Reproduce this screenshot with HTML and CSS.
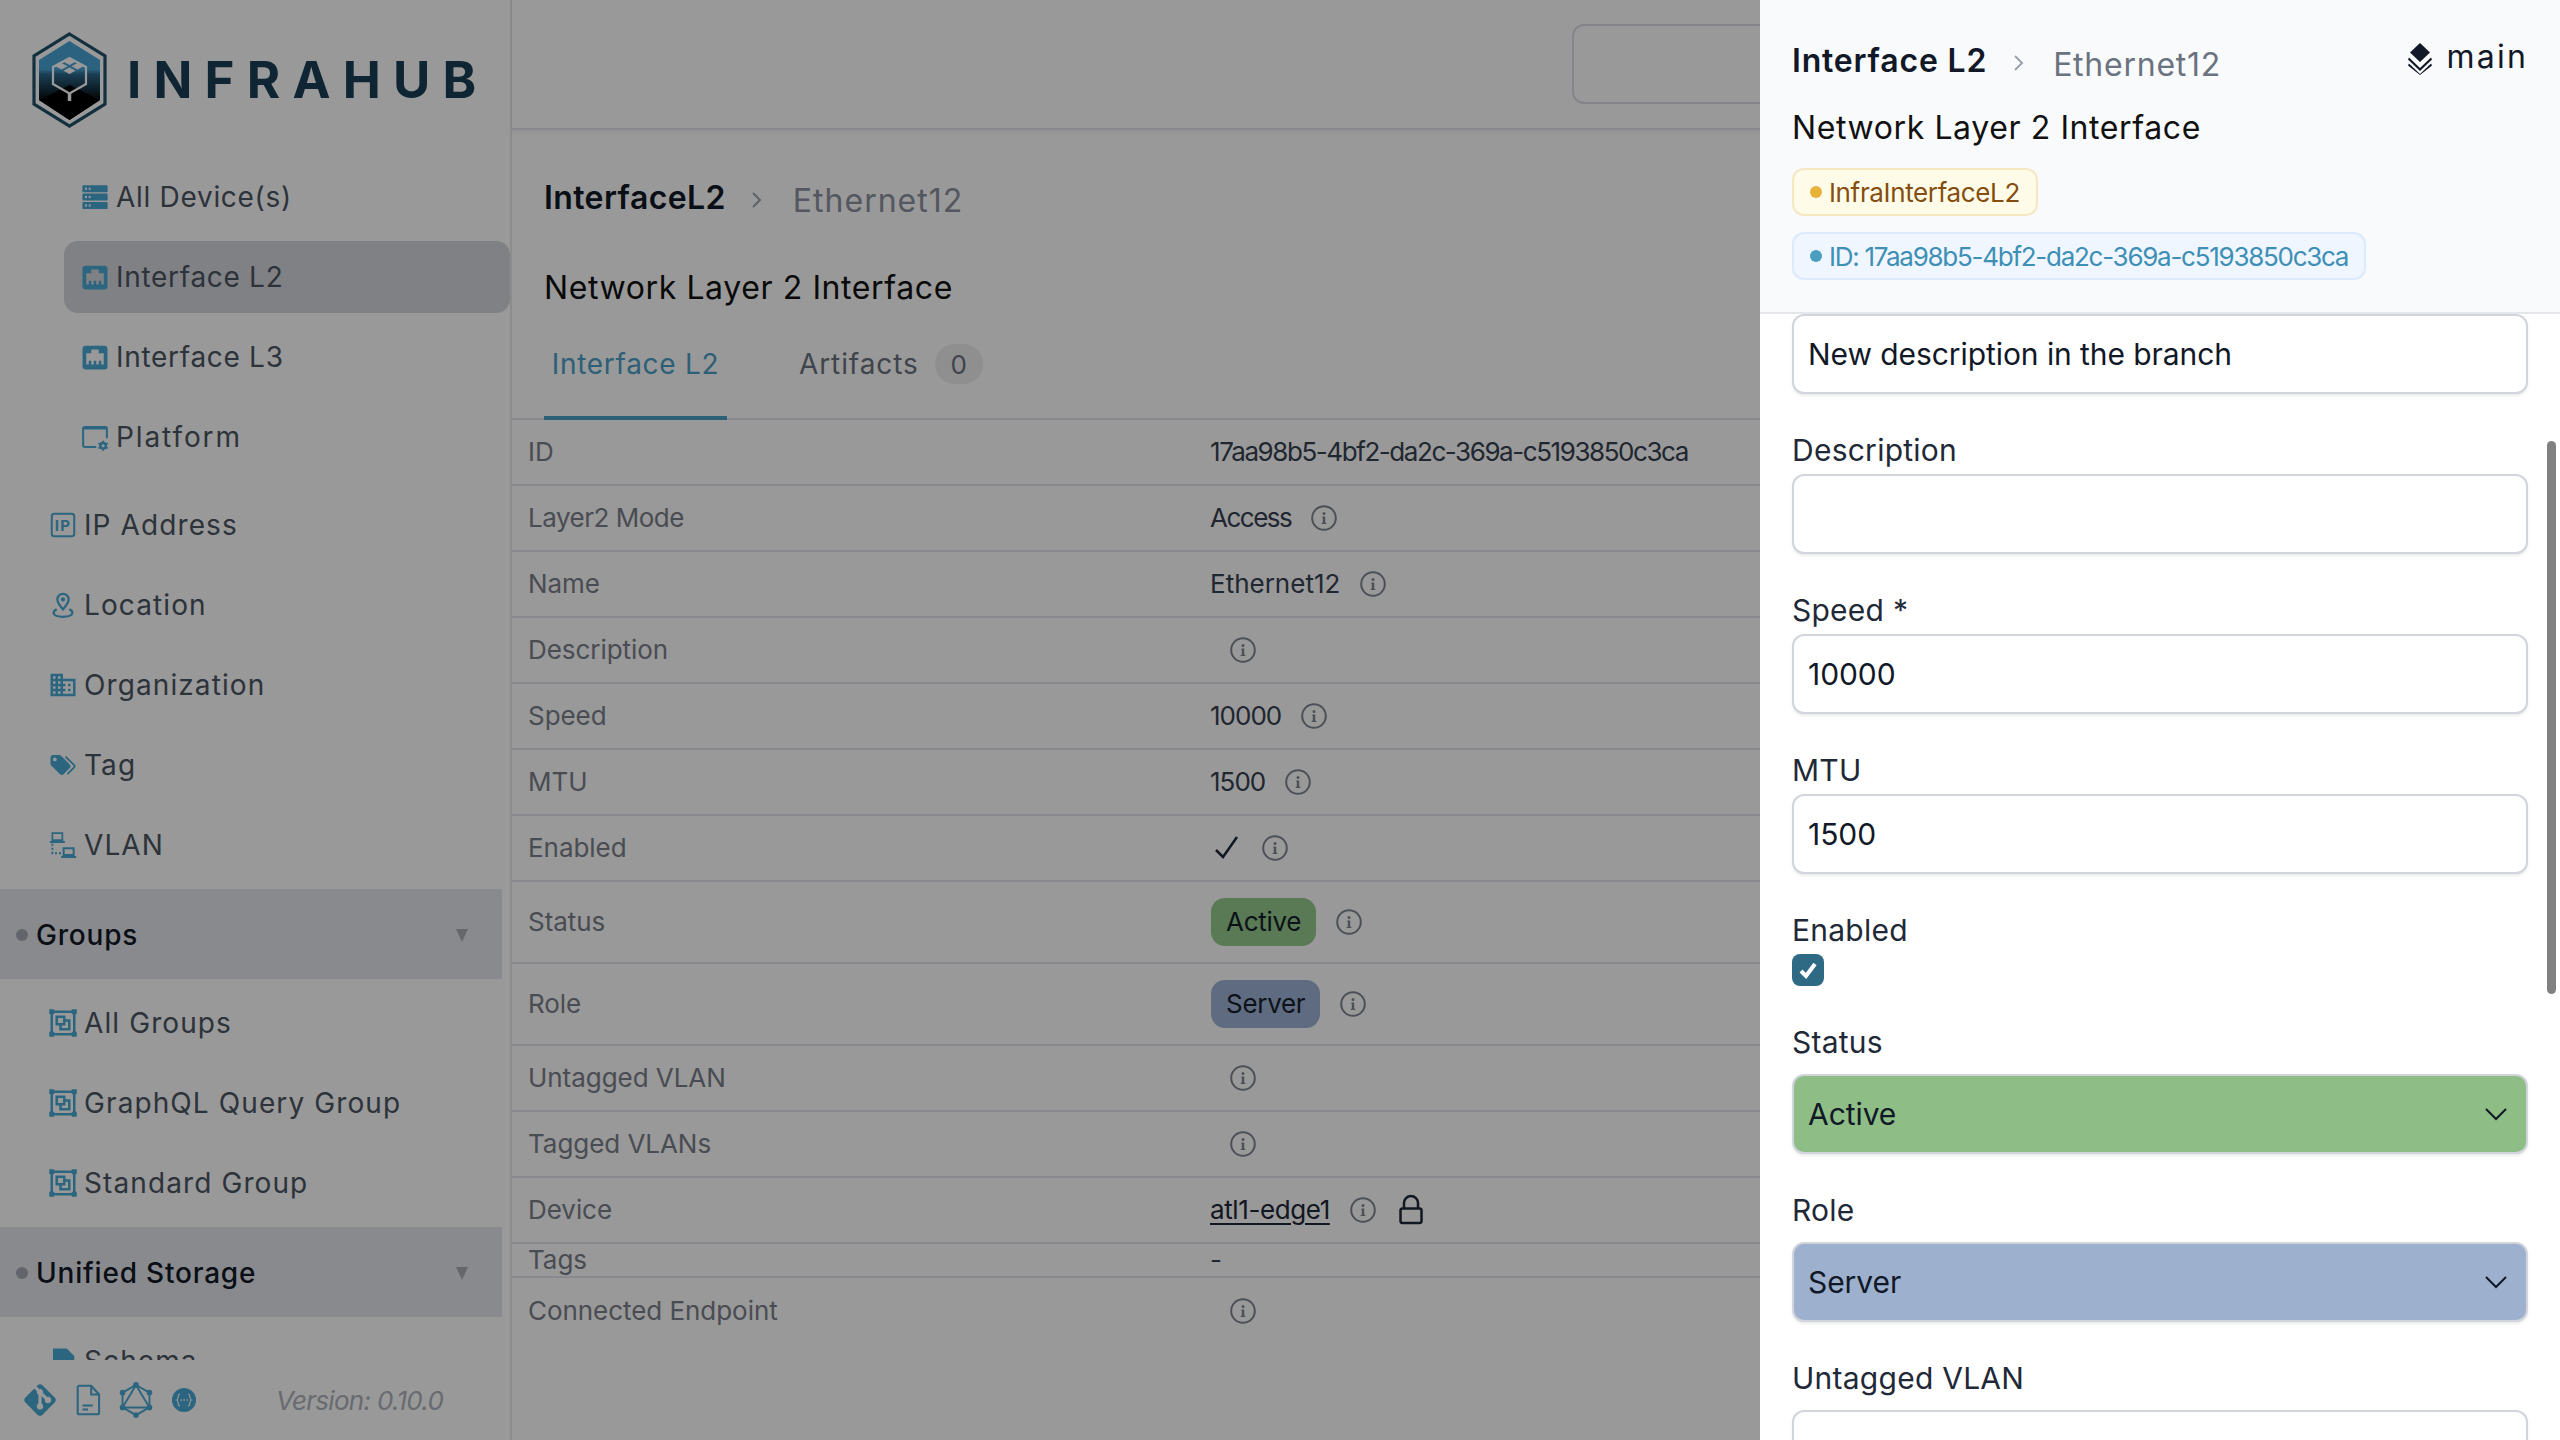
FILE: index.html
```html
<!DOCTYPE html>
<html lang="en">
<head>
    <meta charset="UTF-8">
    <title>Interface L2 - Infrahub</title>
    <link rel="stylesheet" href="styles.css">
</head>
<body>
    <svg class="sprite" xmlns="http://www.w3.org/2000/svg">
        <symbol id="i-server" viewBox="0 0 24 24">
            <path fill="currentColor" fill-rule="evenodd" d="M2.500 2.500h19a.6.6 0 0 1 .6.6v4.400a.6.6 0 0 1-.6.6h-19a.6.6 0 0 1-.6-.6V3.100a.6.6 0 0 1 .6-.6zM4 4.500v1.600h1.600V4.500zM7 4.500v1.600h1.600V4.500zM2.500 9.200h19a.6.6 0 0 1 .6.6v4.400a.6.6 0 0 1-.6.6h-19a.6.6 0 0 1-.6-.6V9.800a.6.6 0 0 1 .6-.6zM4 11.200v1.600h1.600v-1.600zM7 11.200v1.600h1.600v-1.600zM2.500 15.900h19a.6.6 0 0 1 .6.6v4.400a.6.6 0 0 1-.6.6h-19a.6.6 0 0 1-.6-.6v-4.400a.6.6 0 0 1 .6-.6zM4 17.900v1.600h1.600v-1.600zM7 17.900v1.600h1.600v-1.600z"/>
        </symbol>
        <symbol id="i-ethernet" viewBox="0 0 24 24">
            <path fill="currentColor" d="M7,15H9V18H11V15H13V18H15V15H17V18H19V9H15V6H9V9H5V18H7V15M4.38,3H19.63C20.94,3 22,4.06 22,5.38V19.63A2.37,2.37 0 0,1 19.63,22H4.38C3.06,22 2,20.94 2,19.63V5.38C2,4.06 3.06,3 4.38,3Z"/>
        </symbol>
        <symbol id="i-platform" viewBox="0 0 24 24">
            <path fill="none" stroke="currentColor" stroke-width="1.600" d="M13 20H3.800A1.300 1.300 0 0 1 2.500 18.700V5.300A1.300 1.300 0 0 1 3.800 4H20.200A1.300 1.300 0 0 1 21.500 5.300V13"/>
            <path fill="none" stroke="currentColor" stroke-width="2" d="M2.500 5h19"/>
            <circle cx="18.500" cy="19" r="2.200" fill="none" stroke="currentColor" stroke-width="2"/>
            <path fill="none" stroke="currentColor" stroke-width="1.400" d="M18.500 15v1.200M18.500 21.800V23M14.700 17l1.200.6M21.100 20.400l1.200.6M14.700 21l1.200-.6M21.100 17.600l1.200-.6"/>
        </symbol>
        <symbol id="i-ip" viewBox="0 0 24 24">
            <rect x="3" y="3" width="18" height="18" rx="2" fill="none" stroke="currentColor" stroke-width="1.600"/>
            <text class="ip-mark" x="12" y="16.500" text-anchor="middle" fill="currentColor">IP</text>
        </symbol>
        <symbol id="i-pin" viewBox="0 0 24 24">
            <path fill="none" stroke="currentColor" stroke-width="1.800" d="M12 15.500C9.500 12.500 7.500 10 7.500 7.500a4.500 4.500 0 0 1 9 0C16.500 10 14.500 12.500 12 15.500Z"/>
            <circle cx="12" cy="7.500" r="1.700" fill="currentColor"/>
            <path fill="none" stroke="currentColor" stroke-width="1.800" d="M7 15.500c-1.500.6-2.500 1.500-2.500 2.700C4.500 20.300 8 21.500 12 21.500s7.500-1.200 7.500-3.300c0-1.200-1-2.100-2.500-2.700"/>
        </symbol>
        <symbol id="i-domain" viewBox="0 0 24 24">
            <path fill="currentColor" d="M18,15H16V17H18M18,11H16V13H18M20,19H12V17H14V15H12V13H14V11H12V9H20M10,7H8V5H10M10,11H8V9H10M10,15H8V13H10M10,19H8V17H10M6,7H4V5H6M6,11H4V9H6M6,15H4V13H6M6,19H4V17H6M12,7V3H2V21H22V7H12Z"/>
        </symbol>
        <symbol id="i-tag" viewBox="0 0 24 24">
            <path fill="currentColor" d="M5.5,9A1.5,1.5 0 0,0 7,7.5A1.5,1.5 0 0,0 5.5,6A1.5,1.5 0 0,0 4,7.5A1.5,1.5 0 0,0 5.5,9M17.41,11.58C17.77,11.94 18,12.44 18,13C18,13.55 17.78,14.05 17.41,14.41L12.41,19.41C12.05,19.77 11.55,20 11,20C10.45,20 9.95,19.78 9.58,19.41L2.59,12.42C2.22,12.05 2,11.55 2,11V6C2,4.89 2.89,4 4,4H9C9.55,4 10.05,4.22 10.41,4.58L17.41,11.58M13.54,5.71L14.54,4.71L21.41,11.58C21.78,11.94 22,12.45 22,13C22,13.55 21.78,14.05 21.42,14.41L16.04,19.79L15.04,18.79L20.75,13L13.54,5.71Z"/>
        </symbol>
        <symbol id="i-lan" viewBox="0 0 24 24">
            <path fill="none" stroke="currentColor" stroke-width="1.400" d="M3.500 2.500h8v5.500h-8z"/>
            <path fill="none" stroke="currentColor" stroke-width="1.600" d="M1.500 9.500h12M12.500 14.500h8v5.500h-8zM10.500 21.500h12"/>
            <path fill="none" stroke="currentColor" stroke-width="1.600" stroke-dasharray="1.600 1.600" d="M3.500 11v7.500h7"/>
        </symbol>
        <symbol id="i-group" viewBox="0 0 24 24">
            <path fill="currentColor" d="M1,1V5H2V19H1V23H5V22H19V23H23V19H22V5H23V1H19V2H5V1M5,4H19V5H20V19H19V20H5V19H4V5H5M6,6V14H9V18H18V9H14V6M8,8H12V12H8M14,11H16V16H11V14H14"/>
        </symbol>
        <symbol id="i-schema" viewBox="0 0 24 24">
            <path fill="currentColor" d="M4 2h11l6 6v14H4z"/>
        </symbol>
        <symbol id="i-git" viewBox="0 0 24 24">
            <path fill="currentColor" d="M2.6,10.59L8.38,4.8L10.07,6.5C9.83,7.35 10.22,8.28 11,8.73V14.27C10.4,14.61 10,15.26 10,16A2,2 0 0,0 12,18A2,2 0 0,0 14,16C14,15.26 13.6,14.61 13,14.27V9.41L15.07,11.5C15,11.65 15,11.82 15,12A2,2 0 0,0 17,14A2,2 0 0,0 19,12A2,2 0 0,0 17,10C16.82,10 16.65,10 16.5,10.07L13.93,7.5C14.19,6.57 13.71,5.55 12.78,5.16C12.35,5 11.9,4.96 11.5,5.07L9.8,3.38L10.59,2.6C11.37,1.81 12.63,1.81 13.41,2.6L21.4,10.59C22.19,11.37 22.19,12.63 21.4,13.41L13.41,21.4C12.63,22.19 11.37,22.19 10.59,21.4L2.6,13.41C1.81,12.63 1.81,11.37 2.6,10.59Z"/>
        </symbol>
        <symbol id="i-doc" viewBox="0 0 24 24">
            <path fill="none" stroke="currentColor" stroke-width="1.300" stroke-linejoin="round" d="M6.500 3H14L19 8.500V20a1 1 0 0 1-1 1H6.500a1 1 0 0 1-1-1V4a1 1 0 0 1 1-1Z"/>
            <path fill="none" stroke="currentColor" stroke-width="1.300" d="M14 3v5.500h5M8.500 15.500h6.500M8.500 18h3.500"/>
        </symbol>
        <symbol id="i-graphql" viewBox="0 0 24 24">
            <path fill="none" stroke="currentColor" stroke-width="1.200" d="M12 2.500 20.500 7.300V16.700L12 21.500 3.500 16.700V7.300ZM12 2.500 20.500 16.700H3.500Z"/>
            <g fill="currentColor">
                <circle cx="12" cy="2.500" r="1.800"/>
                <circle cx="20.500" cy="7.300" r="1.800"/>
                <circle cx="20.500" cy="16.700" r="1.800"/>
                <circle cx="12" cy="21.500" r="1.800"/>
                <circle cx="3.500" cy="16.700" r="1.800"/>
                <circle cx="3.500" cy="7.300" r="1.800"/>
            </g>
        </symbol>
        <symbol id="i-swagger" viewBox="0 0 24 24">
            <circle cx="12" cy="12" r="7.600" fill="currentColor"/>
            <path fill="none" stroke="#fff" stroke-width=".7" d="M9.400 8.200c-1.600 0-.6 3.200-2 3.800 1.400.6.400 3.800 2 3.800M14.600 8.200c1.600 0 .6 3.200 2 3.800-1.400.6-.4 3.800-2 3.800"/>
            <path fill="none" stroke="#fff" stroke-width=".9" stroke-dasharray=".9 1" d="M9.700 12h5"/>
        </symbol>
        <symbol id="i-info" viewBox="0 0 26 26">
            <circle cx="13" cy="13" r="11.800" fill="none" stroke="currentColor" stroke-width="2"/>
            <path fill="currentColor" d="M11.400 11.600h2.800v6.200h1.100v1.300h-4.600v-1.300h1.100v-4.900h-.4zM13 7a1.500 1.500 0 1 1 0 3 1.500 1.500 0 0 1 0-3Z"/>
        </symbol>
        <symbol id="i-chevron" viewBox="0 0 14 20">
            <path fill="none" stroke="currentColor" stroke-width="2" d="M3 3l7 7-7 7"/>
        </symbol>
        <symbol id="i-down" viewBox="0 0 22 14">
            <path fill="none" stroke="currentColor" stroke-width="2" d="M1 2l10 10L21 2"/>
        </symbol>
    </svg>

    <div class="app">
        <aside class="sidebar">
            <div class="logo">
                <svg class="logo-mark" viewBox="0 0 75 96" xmlns="http://www.w3.org/2000/svg">
                    <defs>
                        <linearGradient id="logo-fill" x1="0" y1="0" x2="0" y2="1">
                            <stop offset="0" stop-color="#46a3d5"/>
                            <stop offset=".36" stop-color="#46a3d5"/>
                            <stop offset=".42" stop-color="#2c6a8c"/>
                            <stop offset=".7" stop-color="#0a1820"/>
                            <stop offset="1" stop-color="#000"/>
                        </linearGradient>
                    </defs>
                    <polygon points="37.5,2 73,24 73,72 37.5,94 2,72 2,24" fill="#fff" stroke="#21506a" stroke-width="3.200"/>
                    <polygon points="37.500,9 68,28 68,68 37.500,88 7,68 7,28" fill="url(#logo-fill)"/>
                    <polygon points="37.500,53 68,68 37.500,88 7,68" fill="#000"/>
                    <polygon points="37.500,26 54,35 54,52 37.500,61.500 21,52 21,35" fill="none" stroke="#fff" stroke-width="2.200"/>
                    <path fill="#fff" d="M37.500 26.500l6 3.200-6 3.200-6-3.200zM29.500 31l6 3.200-6 3.200-6-3.200zM45.500 31l6 3.200-6 3.200-6-3.200zM37.500 35.500l6 3.200-6 3.200-6-3.200z"/>
                    <path fill="none" stroke="#fff" stroke-width="3.500" d="M37.500 61v8"/>
                </svg>
                <span class="logo-text">INFRAHUB</span>
            </div>

            <nav class="nav">
                <div class="nav-sub">
                    <a class="nav-item tight"><svg class="nav-icon"><use href="#i-server"/></svg>All Device(s)</a>
                    <a class="nav-item tight active"><svg class="nav-icon"><use href="#i-ethernet"/></svg>Interface L2</a>
                    <a class="nav-item tight"><svg class="nav-icon"><use href="#i-ethernet"/></svg>Interface L3</a>
                    <a class="nav-item wide"><svg class="nav-icon"><use href="#i-platform"/></svg>Platform</a>
                </div>
                <div class="nav-list">
                    <a class="nav-item"><svg class="nav-icon"><use href="#i-ip"/></svg>IP Address</a>
                    <a class="nav-item"><svg class="nav-icon"><use href="#i-pin"/></svg>Location</a>
                    <a class="nav-item"><svg class="nav-icon"><use href="#i-domain"/></svg>Organization</a>
                    <a class="nav-item"><svg class="nav-icon"><use href="#i-tag"/></svg>Tag</a>
                    <a class="nav-item"><svg class="nav-icon"><use href="#i-lan"/></svg>VLAN</a>
                </div>
                <div class="nav-head"><span class="nav-dot"></span>Groups<span class="nav-caret"></span></div>
                <div class="nav-list">
                    <a class="nav-item"><svg class="nav-icon"><use href="#i-group"/></svg>All Groups</a>
                    <a class="nav-item"><svg class="nav-icon"><use href="#i-group"/></svg>GraphQL Query Group</a>
                    <a class="nav-item"><svg class="nav-icon"><use href="#i-group"/></svg>Standard Group</a>
                </div>
                <div class="nav-head"><span class="nav-dot"></span>Unified Storage<span class="nav-caret"></span></div>
                <div class="nav-list">
                    <a class="nav-item"><svg class="nav-icon"><use href="#i-schema"/></svg>Schema</a>
                </div>
            </nav>

            <footer class="side-foot">
                <svg class="foot-icon"><use href="#i-git"/></svg>
                <svg class="foot-icon"><use href="#i-doc"/></svg>
                <svg class="foot-icon"><use href="#i-graphql"/></svg>
                <svg class="foot-icon"><use href="#i-swagger"/></svg>
                <span class="version">Version: 0.10.0</span>
            </footer>
        </aside>

        <main class="main">
            <div class="topbar"><div class="search"></div></div>

            <div class="crumbs">
                <span class="crumb-title">InterfaceL2</span>
                <svg class="crumb-sep"><use href="#i-chevron"/></svg>
                <span class="crumb-name">Ethernet12</span>
            </div>
            <h1 class="page-title">Network Layer 2 Interface</h1>

            <div class="tabs">
                <div class="tab active">Interface L2</div>
                <div class="tab">Artifacts<span class="tab-count">0</span></div>
            </div>

            <div class="rows">
                <div class="row"><span class="row-label">ID</span><div class="row-value"><span class="mono-id">17aa98b5-4bf2-da2c-369a-c5193850c3ca</span></div></div>
                <div class="row"><span class="row-label tight-label">Layer2 Mode</span><div class="row-value"><span class="tight-value">Access</span><svg class="info"><use href="#i-info"/></svg></div></div>
                <div class="row"><span class="row-label">Name</span><div class="row-value">Ethernet12<svg class="info"><use href="#i-info"/></svg></div></div>
                <div class="row"><span class="row-label">Description</span><div class="row-value"><svg class="info blank"><use href="#i-info"/></svg></div></div>
                <div class="row"><span class="row-label">Speed</span><div class="row-value"><span class="num">10000</span><svg class="info"><use href="#i-info"/></svg></div></div>
                <div class="row"><span class="row-label">MTU</span><div class="row-value"><span class="num">1500</span><svg class="info"><use href="#i-info"/></svg></div></div>
                <div class="row"><span class="row-label">Enabled</span><div class="row-value">
                    <svg class="check" viewBox="0 0 32 32"><path fill="none" stroke="currentColor" stroke-width="2.500" d="M6 18l7 7L27 5"/></svg>
                    <svg class="info"><use href="#i-info"/></svg></div></div>
                <div class="row row-tall"><span class="row-label">Status</span><div class="row-value"><span class="pill pill-active">Active</span><svg class="info"><use href="#i-info"/></svg></div></div>
                <div class="row row-tall"><span class="row-label">Role</span><div class="row-value"><span class="pill pill-server">Server</span><svg class="info"><use href="#i-info"/></svg></div></div>
                <div class="row"><span class="row-label">Untagged VLAN</span><div class="row-value"><svg class="info blank"><use href="#i-info"/></svg></div></div>
                <div class="row"><span class="row-label">Tagged VLANs</span><div class="row-value"><svg class="info blank"><use href="#i-info"/></svg></div></div>
                <div class="row"><span class="row-label">Device</span><div class="row-value"><a class="link">atl1-edge1</a><svg class="info"><use href="#i-info"/></svg>
                    <svg class="lock" viewBox="0 0 30 32"><path fill="none" stroke="currentColor" stroke-width="2.500" d="M8 14.500V9a7 7 0 0 1 14 0v5.500M6.500 14.500h17a2 2 0 0 1 2 2V27a2 2 0 0 1-2 2h-17a2 2 0 0 1-2-2V16.500a2 2 0 0 1 2-2Z"/></svg></div></div>
                <div class="row row-short"><span class="row-label">Tags</span><div class="row-value">-</div></div>
                <div class="row last"><span class="row-label">Connected Endpoint</span><div class="row-value"><svg class="info blank"><use href="#i-info"/></svg></div></div>
            </div>
        </main>
    </div>

    <div class="backdrop"></div>

    <section class="panel">
        <header class="panel-head">
            <div class="panel-top">
                <span class="panel-title">Interface L2</span>
                <svg class="panel-sep"><use href="#i-chevron"/></svg>
                <span class="panel-name">Ethernet12</span>
                <span class="branch">
                    <svg class="branch-icon" viewBox="0 0 26 32"><path fill="currentColor" d="M13 0l10 9.500L13 19 3 9.500zM2 14.500l11 10.500 11-10.500 1 2L13 28 1 16.500zM2 20.500l11 10.500 11-10.500 1 2-12 9.500-12-9.500z"/></svg>
                    main
                </span>
            </div>
            <div class="panel-sub">Network Layer 2 Interface</div>
            <div class="badge badge-kind"><span class="badge-dot"></span>InfraInterfaceL2</div>
            <div class="badge badge-id"><span class="badge-dot"></span>ID: 17aa98b5-4bf2-da2c-369a-c5193850c3ca</div>
        </header>

        <div class="panel-body">
            <div class="input">New description in the branch</div>

            <div class="field"><div class="field-label">Description</div><div class="input"></div></div>
            <div class="field"><div class="field-label">Speed *</div><div class="input">10000</div></div>
            <div class="field"><div class="field-label">MTU</div><div class="input">1500</div></div>
            <div class="field">
                <div class="field-label">Enabled</div>
                <div class="checkbox"><svg viewBox="0 0 32 32"><path fill="none" stroke="#fff" stroke-width="4" d="M9 17l5 5 9-12"/></svg></div>
            </div>
            <div class="field field-select">
                <div class="field-label">Status</div>
                <div class="input select select-active">Active<svg class="select-arrow"><use href="#i-down"/></svg></div>
            </div>
            <div class="field field-select">
                <div class="field-label">Role</div>
                <div class="input select select-server">Server<svg class="select-arrow"><use href="#i-down"/></svg></div>
            </div>
            <div class="field field-select">
                <div class="field-label">Untagged VLAN</div>
                <div class="input"></div>
            </div>
        </div>
        <div class="scroll-thumb"></div>
    </section>
</body>
</html>
```
FILE: styles.css
```css
* {
    box-sizing: border-box;
}

body {
    margin: 0;
    width: 2560px;
    height: 1440px;
    overflow: hidden;
    position: relative;
    font-family: Inter, "Noto Sans", sans-serif;
    font-size: 28px;
    color: #111827;
    background: #fff;
}

.sprite {
    display: none;
}

.ip-mark {
    font-size: 12px;
    font-weight: 700;
}

.app {
    display: flex;
    height: 1440px;
}

/* sidebar */
.sidebar {
    width: 512px;
    flex-shrink: 0;
    display: flex;
    flex-direction: column;
    border-right: 2px solid #e9e9eb;
}

.logo {
    height: 161px;
    flex-shrink: 0;
    padding: 32px 0 0 32px;
    display: flex;
    align-items: flex-start;
}

.logo-mark {
    width: 75px;
    height: 96px;
    flex-shrink: 0;
}

.logo-text {
    margin-left: 20px;
    height: 96px;
    line-height: 96px;
    font-size: 51px;
    font-weight: 700;
    letter-spacing: 12.200px;
    color: #193f55;
}

.nav {
    flex: 1;
    min-height: 0;
    overflow: hidden;
    display: flex;
    flex-direction: column;
    gap: 8px;
}

.nav-sub,
.nav-list {
    display: flex;
    flex-direction: column;
    gap: 8px;
    flex-shrink: 0;
}

.nav-sub {
    padding-left: 64px;
    margin-bottom: 8px;
}

.nav-list {
    padding-left: 32px;
}

.nav-item {
    height: 72px;
    flex-shrink: 0;
    padding-left: 16px;
    display: flex;
    align-items: center;
    gap: 6px;
    border-radius: 14px;
    color: #4b5563;
    letter-spacing: 1.100px;
}

.nav-item.tight {
    letter-spacing: .7px;
}

.nav-item.wide {
    letter-spacing: 1.900px;
}

.nav-item.active {
    background: #d6d7dc;
}

.nav-icon {
    width: 30px;
    height: 30px;
    flex-shrink: 0;
    color: #4aa9d4;
}

.nav-head {
    height: 90px;
    flex-shrink: 0;
    margin-right: 8px;
    padding: 2px 34px 0 16px;
    display: flex;
    align-items: center;
    background: #e5e7eb;
    font-weight: 500;
    letter-spacing: .8px;
}

.nav-dot {
    width: 12px;
    height: 12px;
    margin-right: 8px;
    border-radius: 50%;
    background: #a5a8b5;
}

.nav-caret {
    margin-left: auto;
    border-left: 6.500px solid transparent;
    border-right: 6.500px solid transparent;
    border-top: 13px solid #a9acb3;
}

.side-foot {
    height: 80px;
    flex-shrink: 0;
    padding-left: 21px;
    display: flex;
    align-items: center;
    gap: 10px;
}

.foot-icon {
    width: 38px;
    height: 38px;
    color: #4aa9d4;
}

.version {
    margin-left: 63px;
    font-size: 26px;
    font-style: italic;
    letter-spacing: -.7px;
    color: #adb2ba;
}

/* main column */
.main {
    flex: 1;
    min-width: 0;
}

.topbar {
    height: 130px;
    padding: 24px 0 0 1060px;
    border-bottom: 2px solid #e5e7eb;
    box-shadow: 0 2px 3px rgba(0, 0, 0, .05);
}

.search {
    width: 900px;
    height: 80px;
    border: 2px solid #dcdce4;
    border-radius: 12px;
}

.crumbs {
    height: 40px;
    margin: 47px 0 0 32px;
    display: flex;
    align-items: center;
    font-size: 32px;
}

.crumb-title {
    font-weight: 600;
    letter-spacing: .4px;
}

.crumb-sep {
    width: 14px;
    height: 20px;
    margin: 6px 29px 0 24px;
    color: #9ca3af;
}

.crumb-name {
    margin-top: 6px;
    color: #8c919e;
    letter-spacing: 1px;
}

.page-title {
    height: 40px;
    margin: 51px 0 0 32px;
    font-size: 32px;
    line-height: 40px;
    font-weight: 400;
    letter-spacing: .6px;
    color: #111;
}

.tabs {
    height: 112px;
    padding-left: 32px;
    display: flex;
    gap: 63px;
    border-bottom: 2px solid #e5e7eb;
}

.tab {
    height: 112px;
    padding: 0 9px;
    display: flex;
    align-items: center;
    gap: 16px;
    color: #6b7280;
    letter-spacing: .9px;
}

.tab.active {
    width: 183px;
    padding: 4px 0 0;
    justify-content: center;
    color: #4ba0c8;
    border-bottom: 4px solid #4b9fc7;
    letter-spacing: .7px;
}

.tab-count {
    width: 48px;
    height: 40px;
    border-radius: 20px;
    background: #eeeef0;
    display: flex;
    align-items: center;
    justify-content: center;
    font-size: 26px;
    letter-spacing: 0;
}

.row {
    height: 66px;
    padding-left: 16px;
    display: grid;
    grid-template-columns: 682px 1fr;
    align-items: center;
    border-bottom: 2px solid #e5e7eb;
    font-size: 26px;
}

.row-tall {
    height: 82px;
}

.row-short {
    height: 34px;
}

.row.last {
    border-bottom: none;
}

.row-label {
    margin-top: -1px;
    color: #7b808a;
    letter-spacing: -.05px;
}

.row-label.tight-label {
    letter-spacing: -.5px;
}

.row-value {
    display: flex;
    align-items: center;
    gap: 20px;
    color: #374151;
    line-height: 32px;
}

.mono-id {
    letter-spacing: -1.430px;
}

.num {
    letter-spacing: -1px;
}

.tight-value {
    letter-spacing: -1.500px;
}

.info {
    width: 26px;
    height: 26px;
    flex-shrink: 0;
    color: #7f8591;
}

.info.blank {
    margin-left: 20px;
}

.check {
    width: 32px;
    height: 32px;
    color: #1f2937;
}

.lock {
    width: 30px;
    height: 32px;
    color: #1f2937;
}

.pill {
    height: 48px;
    margin-left: 1px;
    padding: 0 15px;
    display: flex;
    align-items: center;
    border-radius: 14px;
    color: #161e2c;
    letter-spacing: -.3px;
}

.pill-active {
    background: #95cc8c;
}

.pill-server {
    background: #9db3d6;
}

.link {
    color: #1f2937;
    text-decoration: underline;
    text-underline-offset: 4px;
    letter-spacing: -.4px;
}

/* dim layer under the slide-over */
.backdrop {
    position: absolute;
    inset: 0;
    background: rgba(0, 0, 0, .4);
}

.panel {
    position: absolute;
    top: 0;
    right: 0;
    width: 800px;
    height: 1440px;
    background: #fff;
    overflow: hidden;
}

.panel-head {
    height: 314px;
    padding: 0 32px;
    background: #f9fafb;
    border-bottom: 2px solid #e5e7eb;
}

.panel-top {
    height: 88px;
    padding-top: 32px;
    display: flex;
    align-items: center;
    font-size: 32px;
}

.panel-title {
    font-weight: 600;
    letter-spacing: .8px;
}

.panel-sep {
    width: 14px;
    height: 20px;
    margin: 6px 27px 0 25px;
    color: #9ca3af;
}

.panel-name {
    margin-top: 8px;
    color: #6b7280;
    letter-spacing: .76px;
}

.branch {
    margin-left: auto;
    margin-top: -8px;
    display: flex;
    align-items: center;
    gap: 14px;
    letter-spacing: 2.200px;
    color: #111827;
}

.branch-icon {
    width: 26px;
    height: 32px;
    margin-top: 6px;
}

.panel-sub {
    height: 40px;
    margin-top: 20px;
    font-size: 32px;
    line-height: 40px;
    letter-spacing: .6px;
    color: #111;
}

.badge {
    width: fit-content;
    height: 48px;
    margin-top: 20px;
    padding: 0 16px;
    display: flex;
    align-items: center;
    gap: 7px;
    border: 2px solid;
    border-radius: 12px;
    font-size: 26px;
}

.badge + .badge {
    margin-top: 16px;
}

.badge-dot {
    width: 12px;
    height: 12px;
    border-radius: 50%;
    background: currentColor;
}

.badge-kind {
    background: #fefce8;
    border-color: #f6e7c4;
    color: #854d0e;
    letter-spacing: -.36px;
}

.badge-kind .badge-dot {
    background: #e8b23b;
}

.badge-id {
    background: #eff6ff;
    border-color: #dbeafe;
    color: #3e8fb5;
    letter-spacing: -1.270px;
}

.badge-id .badge-dot {
    background: #4a9fc0;
}

.panel-body {
    height: 1126px;
    padding: 0 32px;
    overflow: hidden;
}

.field {
    margin-top: 36px;
}

.field-label {
    height: 40px;
    line-height: 40px;
    font-size: 30px;
    letter-spacing: .25px;
    color: #1f2937;
}

.input {
    height: 80px;
    margin-top: 4px;
    padding: 0 14px;
    display: flex;
    align-items: center;
    background: #fff;
    border: 2px solid #d1d5db;
    border-radius: 12px;
    box-shadow: 0 2px 3px rgba(0, 0, 0, .08);
    font-size: 30px;
    letter-spacing: -.07px;
    color: #111827;
}

.panel-body > .input {
    margin-top: 0;
}

.field-select .input {
    margin-top: 12px;
}

.select {
    justify-content: space-between;
    padding-right: 19px;
}

.select-active {
    background: #8ebd86;
}

.select-server {
    background: #9db0cd;
}

.select-arrow {
    width: 22px;
    height: 14px;
}

.checkbox {
    width: 32px;
    height: 32px;
    margin-top: 4px;
    border-radius: 8px;
    background: #2f6a85;
}

.checkbox svg {
    display: block;
}

.scroll-thumb {
    position: absolute;
    top: 441px;
    right: 4px;
    width: 9px;
    height: 553px;
    border-radius: 5px;
    background: #808080;
}
```
